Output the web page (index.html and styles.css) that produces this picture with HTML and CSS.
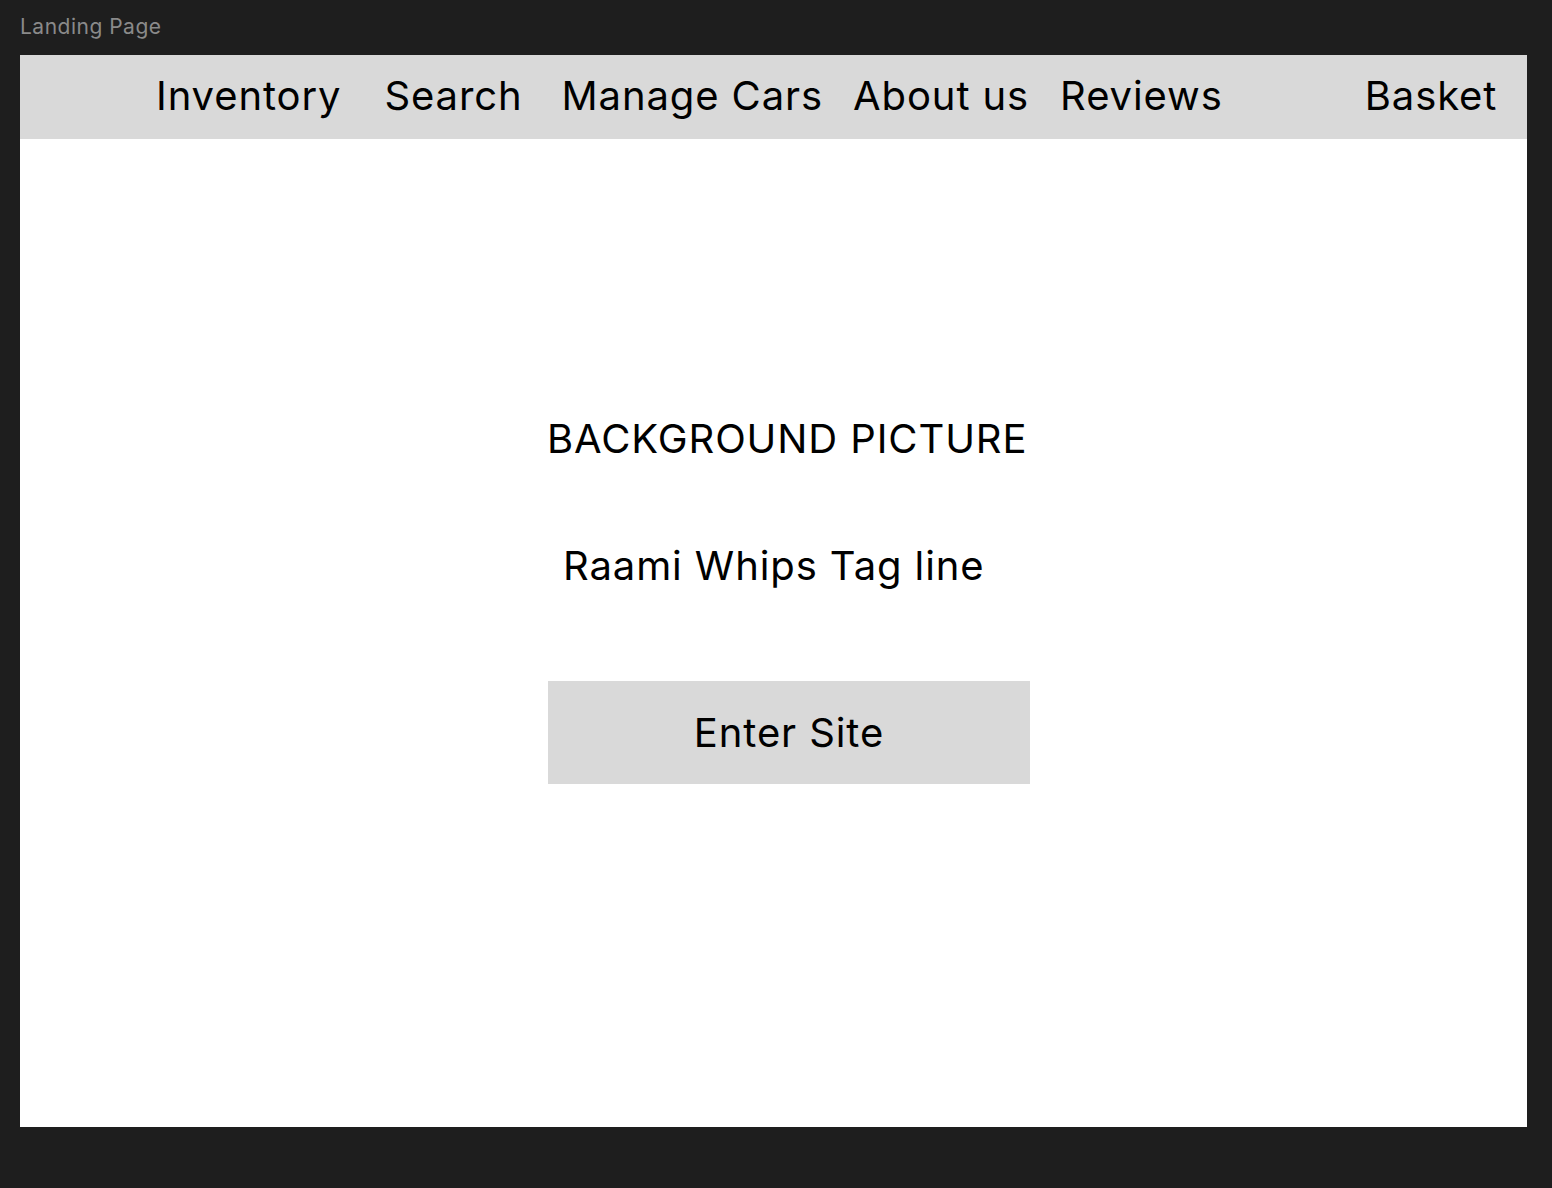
FILE: index.html
```html
<!DOCTYPE html>
<html lang="en">
<head>
<meta charset="utf-8">
<title>Landing Page</title>
<link rel="stylesheet" href="styles.css">
</head>
<body>
<div class="canvas">
  <div class="frame-label">Landing Page</div>
  <div class="frame">
    <nav class="nav">
      <a class="nav-item inventory">Inventory</a>
      <a class="nav-item search">Search</a>
      <a class="nav-item manage">Manage Cars</a>
      <a class="nav-item about">About us</a>
      <a class="nav-item reviews">Reviews</a>
      <a class="nav-item basket">Basket</a>
    </nav>
    <main class="hero">
      <div class="bg-text">BACKGROUND PICTURE</div>
      <div class="tagline">Raami Whips Tag line</div>
      <button class="enter-btn">Enter Site</button>
    </main>
  </div>
</div>
</body>
</html>
```

FILE: styles.css
```css
* { box-sizing: border-box; }

html, body {
  margin: 0;
  padding: 0;
  background: #1e1e1e;
  font-family: Inter, "Noto Sans", sans-serif;
}

.canvas {
  width: 1552px;
  height: 1188px;
  padding: 0 0 0 20px;
}

.frame-label {
  height: 55px;
  padding-top: 15px;
  font-size: 21px;
  line-height: 24px;
  letter-spacing: 0.5px;
  color: #8a8a8a;
}

.frame {
  width: 1507px;
  height: 1072px;
  background: #ffffff;
}

.nav {
  height: 84px;
  background: #d9d9d9;
  display: flex;
  align-items: flex-start;
  padding: 17px 0 0 136px;
  font-size: 40px;
  letter-spacing: 0.9px;
  color: #000;
}

.nav-item {
  line-height: 48px;
  white-space: nowrap;
}

.search { margin-left: 43px; }
.manage { margin-left: 39px; }
.about { margin-left: 30px; }
.reviews { margin-left: 31px; }
.basket { margin-left: 142px; }

.hero {
  display: flex;
  flex-direction: column;
  align-items: flex-start;
  padding: 276px 0 0 527px;
  color: #000;
  font-size: 40px;
  letter-spacing: 0.9px;
}

.bg-text {
  line-height: 48px;
}

.tagline {
  line-height: 48px;
  margin-top: 79px;
  margin-left: 16px;
}

.enter-btn {
  margin-top: 91px;
  margin-left: 1px;
  width: 482px;
  height: 103px;
  border: none;
  background: #d9d9d9;
  font-family: Inter, "Noto Sans", sans-serif;
  font-size: 40px;
  letter-spacing: 0.9px;
  color: #000;
  padding: 0;
}
```
